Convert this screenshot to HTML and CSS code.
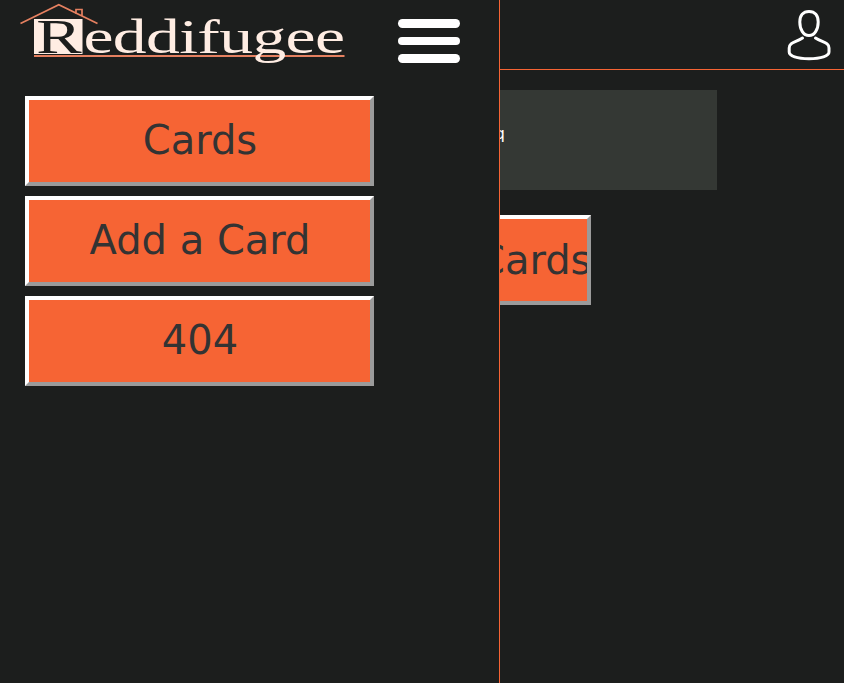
FILE: index.html
```html
<!DOCTYPE html>
<html lang="en">
<head>
<meta charset="utf-8">
<title>Reddifugee</title>
<link rel="stylesheet" href="styles.css">
</head>
<body>
<header class="header">
  <svg class="user" viewBox="0 0 44 52" aria-hidden="true">
    <path d="M22 2.500C16 2.500 12.800 6.500 12.800 13C12.800 20.500 16.500 26.500 22 26.500C27.500 26.500 31.200 20.500 31.200 13C31.200 6.500 28 2.500 22 2.500Z"/>
    <path d="M15.500 29C9 33.500 2.200 33 2.200 39V43C2.200 47 10 49.700 22 49.700C34 49.700 42 47 42 43V39C42 33 35 33.500 28.500 29"/>
  </svg>
</header>
<main class="main">
  <section class="panel"><span>q</span></section>
  <button class="button button-main"><span>Cards</span></button>
</main>
<aside class="drawer">
  <div class="drawer-head">
    <svg class="logo" viewBox="0 0 330 70" role="img" aria-label="Reddifugee">
      <path class="roof" d="M0.500 23.500L38.800 4.800L77.500 23.500M56 14V9.500H62V16.500"/>
      <rect class="tile" x="14" y="19" width="48.500" height="35"/>
      <path class="rule" d="M14 56H324.500"/>
      <text class="initial" transform="translate(16.300 52.900) scale(1.390 1)">R</text>
      <text class="word" transform="translate(63.500 52.900) scale(1.380 1)" textLength="189.500" lengthAdjust="spacing">eddifugee</text>
    </svg>
    <div class="menu"><i></i><i></i><i></i></div>
  </div>
  <nav class="nav">
    <button class="button">Cards</button>
    <button class="button">Add a Card</button>
    <button class="button">404</button>
  </nav>
</aside>
</body>
</html>
```
FILE: styles.css
```css
* { box-sizing: border-box; }
body {
  margin: 0;
  height: 683px;
  overflow: hidden;
  background: #1c1e1d;
  color: #fff;
  font: 16px "DejaVu Sans", sans-serif;
}
.header {
  display: flex;
  justify-content: flex-end;
  height: 70px;
  padding: 9px 13px 0 0;
  border-bottom: 1px solid #f66434;
}
.user { width: 44px; height: 52px; fill: none; stroke: #fff; stroke-width: 3; stroke-linecap: round; }
.main {
  display: flex;
  flex-direction: column;
  align-items: center;
  gap: 25px;
  padding-top: 20px;
}
.panel {
  width: 590px;
  height: 100px;
  padding: 34px 212px 0 0;
  background: #343834;
  text-align: right;
}
.button {
  display: block;
  width: 349px;
  height: 90px;
  padding: 0 0 2px 1px;
  border: 4px solid;
  border-color: #fff #9b9b9b #9b9b9b #fff;
  background: #f66434;
  color: #333;
  font: 40px "DejaVu Sans", sans-serif;
}
.button-main {
  width: 338px;
  padding: 0 0 0 220px;
  overflow: hidden;
  text-align: left;
  white-space: nowrap;
}
.drawer {
  position: fixed;
  top: 0;
  left: 0;
  width: 500px;
  height: 100%;
  border-right: 1px solid #f66434;
  background: #1c1e1d;
}
.drawer-head { display: flex; height: 96px; padding-left: 20px; }
.logo { width: 330px; height: 70px; }
.roof, .rule { fill: none; stroke: #e58060; stroke-width: 1.7; }
.rule { stroke-width: 2; }
.tile, .word { fill: #ffede3; }
.initial, .word { font: 49px "Liberation Serif", serif; }
.initial { fill: #1c1e1d; }
.menu {
  display: flex;
  flex-direction: column;
  justify-content: space-between;
  width: 62px;
  height: 44px;
  margin: 19px 0 0 48px;
}
.menu i { height: 9px; border-radius: 4.5px; background: #fff; }
.menu i:nth-child(2) { height: 8px; }
.nav { display: flex; flex-direction: column; gap: 10px; padding-left: 25px; }
```
